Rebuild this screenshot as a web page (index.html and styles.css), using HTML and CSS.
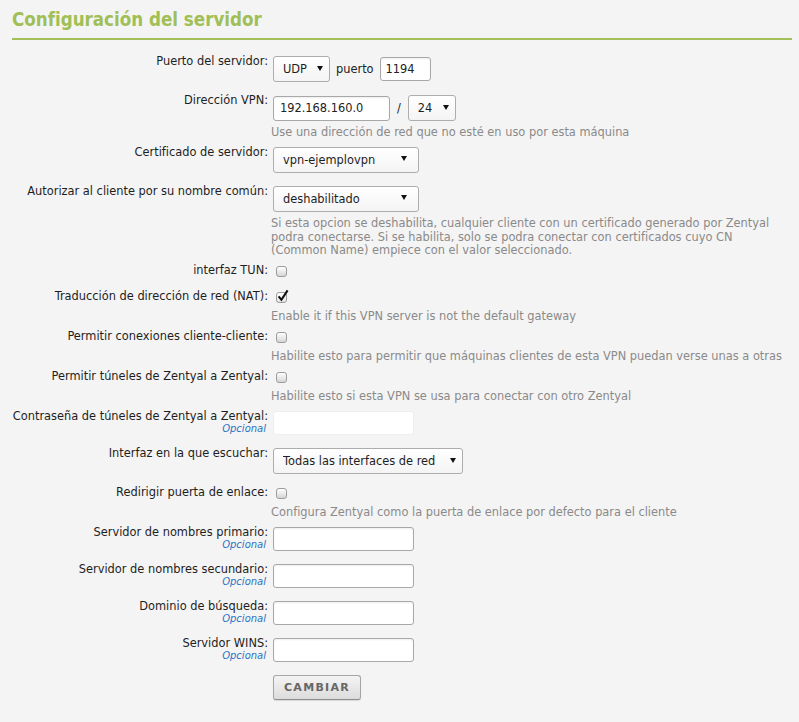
FILE: index.html
```html
<!DOCTYPE html>
<html lang="es">
<head>
<meta charset="utf-8">
<title>Configuración del servidor</title>
<link rel="stylesheet" href="styles.css">
</head>
<body>
<div class="page">
  <h2 class="title">Configuración del servidor</h2>
  <form class="form">
    <div class="row">
      <label class="label">Puerto del servidor:</label>
      <div class="field">
        <div class="inline">
          <span class="select w57"><select><option>UDP</option></select></span>
          <span class="word">puerto</span>
          <input class="text w51" type="text" value="1194">
        </div>
      </div>
    </div>

    <div class="row has-help">
      <label class="label">Dirección VPN:</label>
      <div class="field">
        <div class="inline">
          <input class="text ip w117" type="text" value="192.168.160.0">
          <span class="slash">/</span>
          <span class="select w48"><select><option>24</option></select></span>
        </div>
        <div class="help">Use una dirección de red que no esté en uso por esta máquina</div>
      </div>
    </div>

    <div class="row">
      <label class="label">Certificado de servidor:</label>
      <div class="field">
        <span class="select w146 wide-arrow"><select><option>vpn-ejemplovpn</option></select></span>
      </div>
    </div>

    <div class="row has-help">
      <label class="label">Autorizar al cliente por su nombre común:</label>
      <div class="field">
        <span class="select w146 wide-arrow"><select><option>deshabilitado</option></select></span>
        <div class="help">Si esta opcion se deshabilita, cualquier cliente con un certificado generado por Zentyal<br>podra conectarse. Si se habilita, solo se podra conectar con certificados cuyo CN<br>(Common Name) empiece con el valor seleccionado.</div>
      </div>
    </div>

    <div class="row cb-row">
      <label class="label">interfaz TUN:</label>
      <div class="field"><div class="cbwrap"><span class="cb"></span></div></div>
    </div>

    <div class="row has-help">
      <label class="label">Traducción de dirección de red (NAT):</label>
      <div class="field">
        <div class="cbwrap"><span class="cb checked"><svg class="tick" viewBox="0 0 12 13" width="12" height="13"><path d="M1.6 7.4 L4.4 10.8 L10.6 1.4" fill="none" stroke="#111" stroke-width="2.1" stroke-linejoin="miter"/></svg></span></div>
        <div class="help">Enable it if this VPN server is not the default gateway</div>
      </div>
    </div>

    <div class="row has-help">
      <label class="label">Permitir conexiones cliente-cliente:</label>
      <div class="field">
        <div class="cbwrap"><span class="cb"></span></div>
        <div class="help">Habilite esto para permitir que máquinas clientes de esta VPN puedan verse unas a otras</div>
      </div>
    </div>

    <div class="row has-help">
      <label class="label">Permitir túneles de Zentyal a Zentyal:</label>
      <div class="field">
        <div class="cbwrap"><span class="cb"></span></div>
        <div class="help">Habilite esto si esta VPN se usa para conectar con otro Zentyal</div>
      </div>
    </div>

    <div class="row">
      <label class="label">Contraseña de túneles de Zentyal a Zentyal:<span class="opt">Opcional</span></label>
      <div class="field"><input class="text plain w141" type="password"></div>
    </div>

    <div class="row">
      <label class="label">Interfaz en la que escuchar:</label>
      <div class="field">
        <span class="select w190"><select><option>Todas las interfaces de red</option></select></span>
      </div>
    </div>

    <div class="row has-help">
      <label class="label">Redirigir puerta de enlace:</label>
      <div class="field">
        <div class="cbwrap"><span class="cb"></span></div>
        <div class="help">Configura Zentyal como la puerta de enlace por defecto para el cliente</div>
      </div>
    </div>

    <div class="row">
      <label class="label">Servidor de nombres primario:<span class="opt">Opcional</span></label>
      <div class="field"><input class="text w141" type="text"></div>
    </div>

    <div class="row">
      <label class="label">Servidor de nombres secundario:<span class="opt">Opcional</span></label>
      <div class="field"><input class="text w141" type="text"></div>
    </div>

    <div class="row">
      <label class="label">Dominio de búsqueda:<span class="opt">Opcional</span></label>
      <div class="field"><input class="text w141" type="text"></div>
    </div>

    <div class="row">
      <label class="label">Servidor WINS:<span class="opt">Opcional</span></label>
      <div class="field"><input class="text w141" type="text"></div>
    </div>

    <div class="row">
      <span class="label"></span>
      <div class="field"><button class="btn" type="button">CAMBIAR</button></div>
    </div>
  </form>
</div>
</body>
</html>
```

FILE: styles.css
```css
html, body {
  margin: 0;
  background: #f4f4f4;
}

body {
  font-family: "DejaVu Sans", Verdana, sans-serif;
  font-size: 11.4px;
  color: #222;
}

.page {
  padding: 0 7px 0 12px;
}

.title {
  margin: 0;
  padding: 8px 0 6px;
  font-family: "DejaVu Sans Condensed", "DejaVu Sans", sans-serif;
  font-stretch: condensed;
  font-weight: bold;
  font-size: 18.6px;
  line-height: 24px;
  color: #a0bf55;
  border-bottom: 2px solid #a2bf5a;
}

.form {
  margin: 14px 0 0 -4px;
}

.row {
  display: flex;
  align-items: flex-start;
  margin-bottom: 11px;
}

.row.has-help {
  margin-bottom: 5.5px;
}

.row.cb-row {
  margin-bottom: 10px;
}

.label {
  flex: 0 0 260px;
  text-align: right;
  line-height: 14px;
  white-space: nowrap;
  color: #1e1e1e;
}

.opt {
  display: block;
  font-size: 10px;
  line-height: 12px;
  font-style: italic;
  color: #2b73c4;
  padding-right: 2px;
}

.field {
  margin-left: 5px;
  padding-top: 2px;
}

.inline {
  display: flex;
  align-items: center;
  height: 26px;
}

.word {
  margin: 0 6px;
}

.slash {
  margin: 0 7px;
}

/* text inputs */
.text {
  box-sizing: border-box;
  display: block;
  height: 24px;
  margin: 0;
  padding: 0 5px;
  border: 1px solid #a8a8a8;
  border-radius: 3px;
  background: #fff;
  box-shadow: inset 0 1px 2px rgba(0, 0, 0, 0.07);
  font: inherit;
  color: #222;
  outline: none;
}

.text.ip {
  height: 25px;
  padding-left: 6px;
}

.text.plain {
  border-color: #efefef;
  box-shadow: none;
}

.w51 { width: 51px; }
.w117 { width: 117px; }
.w141 { width: 141px; }

/* selects */
.select {
  position: relative;
  display: block;
}

.select select {
  -webkit-appearance: none;
  appearance: none;
  box-sizing: border-box;
  display: block;
  width: 100%;
  height: 26px;
  margin: 0;
  padding: 0 0 0 9px;
  border: 1px solid #adadad;
  border-radius: 3px;
  background: linear-gradient(#ffffff, #f4f4f4);
  font: inherit;
  color: #1e1e1e;
  outline: none;
}

.select::after {
  content: "";
  position: absolute;
  right: 7px;
  top: 10px;
  width: 0;
  height: 0;
  border-left: 3px solid transparent;
  border-right: 3px solid transparent;
  border-top: 5px solid #111;
  pointer-events: none;
}

.select.wide-arrow::after {
  right: 12px;
  top: 9px;
}

.w57 { width: 57px; }
.w48 { width: 48px; }
.w146 { width: 146px; }
.w190 { width: 190px; }

/* help text */
.help {
  margin: 5px 0 0 -2px;
  line-height: 13.5px;
  color: #8a8a8a;
  white-space: nowrap;
}

/* checkboxes */
.cbwrap {
  height: 13px;
  padding-top: 1px;
}

.cb {
  position: relative;
  display: block;
  box-sizing: border-box;
  width: 11px;
  height: 11px;
  margin: 0 0 0 3px;
  border: 1px solid #9c9c9c;
  border-radius: 3px;
  background: linear-gradient(#ffffff, #d6d6d6);
}

.cb.checked {
  background: linear-gradient(#ffffff, #e6e6e6);
}

.tick {
  position: absolute;
  left: 0;
  top: -4px;
}

/* button */
.btn {
  box-sizing: border-box;
  display: block;
  width: 88px;
  height: 25px;
  margin: 0;
  padding: 0;
  border: 1px solid #a6a6a6;
  border-bottom-color: #8e8e8e;
  border-radius: 3px;
  background: linear-gradient(#f4f4f4, #dcdcdc);
  box-shadow: 0 1px 1px rgba(0, 0, 0, 0.12);
  font-family: "DejaVu Sans", Verdana, sans-serif;
  font-weight: bold;
  font-size: 11px;
  letter-spacing: 1.3px;
  color: #666;
}
```
